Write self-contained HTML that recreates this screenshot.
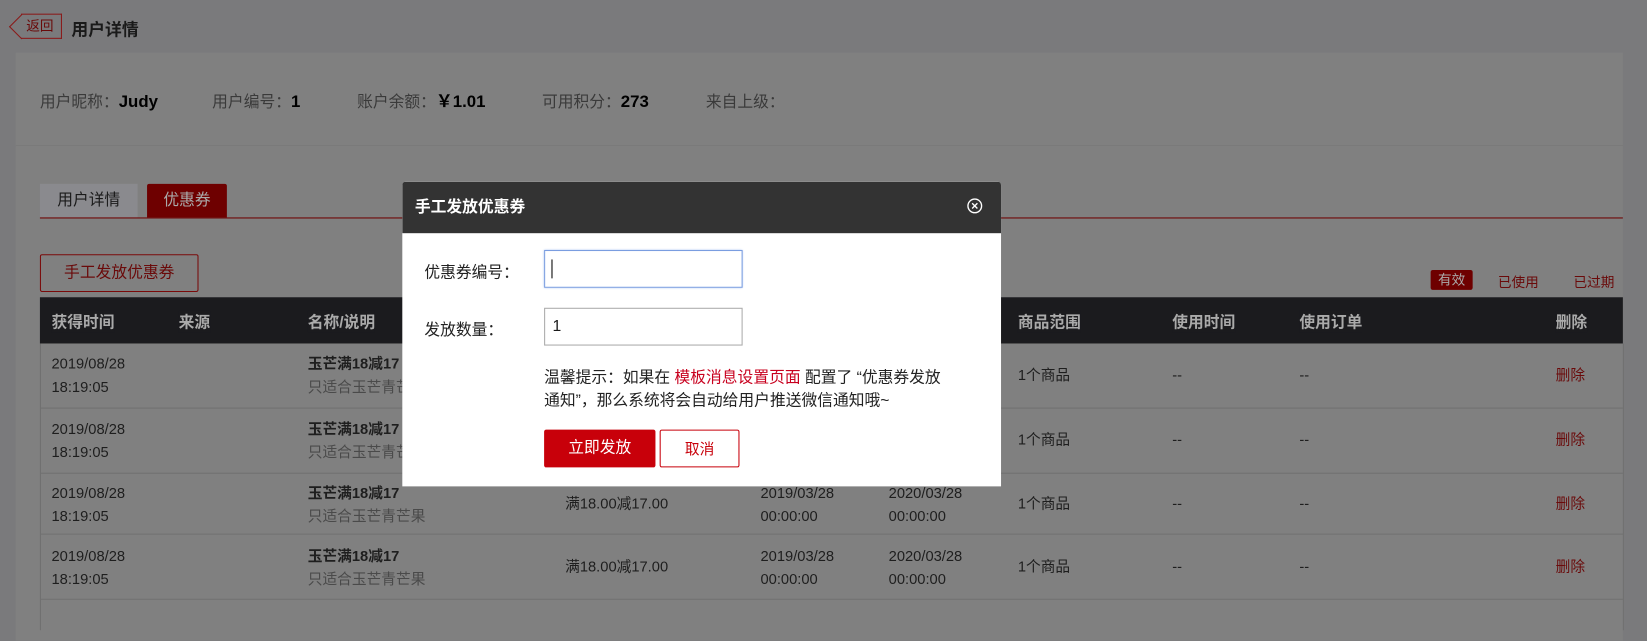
<!DOCTYPE html>
<html><head><meta charset="utf-8"><style>
*{margin:0;padding:0;box-sizing:border-box}
body{width:1647px;height:600px;overflow:hidden;background:#7a7a7c;font-family:"Liberation Sans","Noto Sans CJK SC",sans-serif;font-size:14px;color:#1a1a1a;position:relative}
#w{position:absolute;left:0;top:0;width:1568px;height:572px;transform:scale(1.0504);transform-origin:0 0}
.abs{position:absolute}
.panel{left:15px;top:50px;width:1530px;height:560px;background:#808080}
.back{left:20px;top:13px;width:39px;height:24px;border:1px solid #8a1a1a;border-left:none;color:#6a0a0a;font-size:13px;line-height:22px;padding-left:5px}
.back:before{content:"";position:absolute;left:-8px;top:3px;width:16px;height:16px;border-left:1px solid #8a1a1a;border-bottom:1px solid #8a1a1a;transform:rotate(45deg)}
.info{line-height:20px;white-space:nowrap}
.info span{color:#3a3a3a;font-size:15px;vertical-align:baseline}
.info b{color:#000;font-size:16px;vertical-align:baseline}
.th{background:#1b1b1e;color:#aaa;font-weight:bold;font-size:15px}
.cell{font-size:14px;color:#1e1e1e;line-height:22px}
.gray{color:#4a4a4a}
.red{color:#6a0a0a}
</style></head><body><div id="w">
<div class="abs back">返回</div>
<div class="abs" style="left:68px;top:15px;font-size:16px;font-weight:bold;color:#1a1a1a">用户详情</div>
<div class="abs panel"></div>
<div class="abs" style="left:15px;top:138px;width:1530px;height:1px;background:#7a7a7a"></div>
<div class="abs info" style="left:38px;top:87px"><span>用户昵称：</span><b>Judy</b></div>
<div class="abs info" style="left:202px;top:87px"><span>用户编号：</span><b>1</b></div>
<div class="abs info" style="left:340px;top:87px"><span>账户余额：</span><b>￥1.01</b></div>
<div class="abs info" style="left:516px;top:87px"><span>可用积分：</span><b>273</b></div>
<div class="abs info" style="left:672px;top:87px"><span>来自上级：</span></div>
<div class="abs" style="left:38px;top:175px;width:93px;height:32px;background:#8a8a8e;color:#1a1a1a;font-size:15px;text-align:center;line-height:32px">用户详情</div>
<div class="abs" style="left:140px;top:175px;width:76px;height:32px;background:#6e0000;color:#aaa;font-size:15px;text-align:center;line-height:32px;border-radius:2px 2px 0 0">优惠券</div>
<div class="abs" style="left:38px;top:207px;width:1507px;height:1px;background:#6e0000"></div>
<div class="abs" style="left:38px;top:242px;width:151px;height:36px;border:1px solid #7a0a0a;color:#6a0a0a;font-size:15px;text-align:center;line-height:34px;border-radius:2px">手工发放优惠券</div>
<div class="abs" style="left:1362px;top:257px;width:40px;height:19px;background:#6e0000;color:#aaa;font-size:13px;text-align:center;line-height:19px;border-radius:2px">有效</div>
<div class="abs red" style="left:1426px;top:258px;font-size:13px">已使用</div>
<div class="abs red" style="left:1498px;top:258px;font-size:13px">已过期</div>
<div class="abs th" style="left:38px;top:283px;width:1507px;height:44px"></div>
<div class="abs th" style="left:49px;top:296px">获得时间</div>
<div class="abs th" style="left:170px;top:296px">来源</div>
<div class="abs th" style="left:293px;top:296px">名称/说明</div>
<div class="abs th" style="left:969px;top:296px">商品范围</div>
<div class="abs th" style="left:1116px;top:296px">使用时间</div>
<div class="abs th" style="left:1237px;top:296px">使用订单</div>
<div class="abs th" style="left:1481px;top:296px">删除</div>
<div class="abs" style="left:38px;top:388px;width:1507px;height:1px;background:#707070"></div>
<div class="abs" style="left:38px;top:450px;width:1507px;height:1px;background:#707070"></div>
<div class="abs" style="left:38px;top:508px;width:1507px;height:1px;background:#707070"></div>
<div class="abs" style="left:38px;top:570px;width:1507px;height:1px;background:#707070"></div>
<div class="abs" style="left:38px;top:327px;width:1px;height:273px;background:#707070"></div>
<div class="abs" style="left:1545px;top:327px;width:1px;height:273px;background:#707070"></div>

<div class="abs cell" style="left:49px;top:335px">2019/08/28<br>18:19:05</div>
<div class="abs cell" style="left:293px;top:335px"><b>玉芒满18减17</b><br><span class="gray">只适合玉芒青芒果</span></div>
<div class="abs cell" style="left:969px;top:346px">1个商品</div>
<div class="abs cell" style="left:1116px;top:346px">--</div>
<div class="abs cell" style="left:1237px;top:346px">--</div>
<div class="abs cell red" style="left:1481px;top:346px">删除</div>

<div class="abs cell" style="left:49px;top:397px">2019/08/28<br>18:19:05</div>
<div class="abs cell" style="left:293px;top:397px"><b>玉芒满18减17</b><br><span class="gray">只适合玉芒青芒果</span></div>
<div class="abs cell" style="left:969px;top:407px">1个商品</div>
<div class="abs cell" style="left:1116px;top:407px">--</div>
<div class="abs cell" style="left:1237px;top:407px">--</div>
<div class="abs cell red" style="left:1481px;top:407px">删除</div>

<div class="abs cell" style="left:49px;top:458px">2019/08/28<br>18:19:05</div>
<div class="abs cell" style="left:293px;top:458px"><b>玉芒满18减17</b><br><span class="gray">只适合玉芒青芒果</span></div>
<div class="abs cell" style="left:538px;top:468px">满18.00减17.00</div>
<div class="abs cell" style="left:724px;top:458px">2019/03/28<br>00:00:00</div>
<div class="abs cell" style="left:846px;top:458px">2020/03/28<br>00:00:00</div>
<div class="abs cell" style="left:969px;top:468px">1个商品</div>
<div class="abs cell" style="left:1116px;top:468px">--</div>
<div class="abs cell" style="left:1237px;top:468px">--</div>
<div class="abs cell red" style="left:1481px;top:468px">删除</div>

<div class="abs cell" style="left:49px;top:518px">2019/08/28<br>18:19:05</div>
<div class="abs cell" style="left:293px;top:518px"><b>玉芒满18减17</b><br><span class="gray">只适合玉芒青芒果</span></div>
<div class="abs cell" style="left:538px;top:528px">满18.00减17.00</div>
<div class="abs cell" style="left:724px;top:518px">2019/03/28<br>00:00:00</div>
<div class="abs cell" style="left:846px;top:518px">2020/03/28<br>00:00:00</div>
<div class="abs cell" style="left:969px;top:528px">1个商品</div>
<div class="abs cell" style="left:1116px;top:528px">--</div>
<div class="abs cell" style="left:1237px;top:528px">--</div>
<div class="abs cell red" style="left:1481px;top:528px">删除</div>

<div class="abs" style="left:383px;top:173px;width:570px;height:290px;background:#fff;border-radius:3px 3px 0 0;overflow:hidden">
  <div style="height:49px;background:#333;color:#fff;font-weight:bold;font-size:15px;line-height:49px;padding-left:12px">手工发放优惠券</div>
  <svg class="abs" style="left:537px;top:15px" width="16" height="16" viewBox="0 0 16 16"><circle cx="8" cy="8" r="6.5" fill="none" stroke="#fff" stroke-width="1.3"/><path d="M5.5 5.5L10.5 10.5M10.5 5.5L5.5 10.5" stroke="#fff" stroke-width="1.3"/></svg>
  <div class="abs" style="left:21px;top:75px;font-size:15px;color:#222">优惠券编号：</div>
  <div class="abs" style="left:135px;top:65px;width:189px;height:36px;border:1px solid #7a9de0;box-shadow:0 0 2px #9ab8f0"><div style="position:absolute;left:6px;top:8px;width:1px;height:18px;background:#000"></div></div>
  <div class="abs" style="left:21px;top:130px;font-size:15px;color:#222">发放数量：</div>
  <div class="abs" style="left:135px;top:120px;width:189px;height:36px;border:1px solid #aaa;font-size:15px;line-height:34px;padding-left:7px">1</div>
  <div class="abs" style="left:135px;top:176px;width:410px;font-size:15px;line-height:22px;color:#222">温馨提示：如果在 <span style="color:#c8001e">模板消息设置页面</span> 配置了 “优惠券发放<br>通知”，那么系统将会自动给用户推送微信通知哦~</div>
  <div class="abs" style="left:135px;top:236px;width:106px;height:36px;background:#c8000a;color:#fff;font-size:15px;text-align:center;line-height:36px;border-radius:2px">立即发放</div>
  <div class="abs" style="left:245px;top:236px;width:76px;height:36px;border:1px solid #c8000a;color:#c8000a;font-size:14px;text-align:center;line-height:34px;border-radius:2px">取消</div>
</div>
</div></body></html>
